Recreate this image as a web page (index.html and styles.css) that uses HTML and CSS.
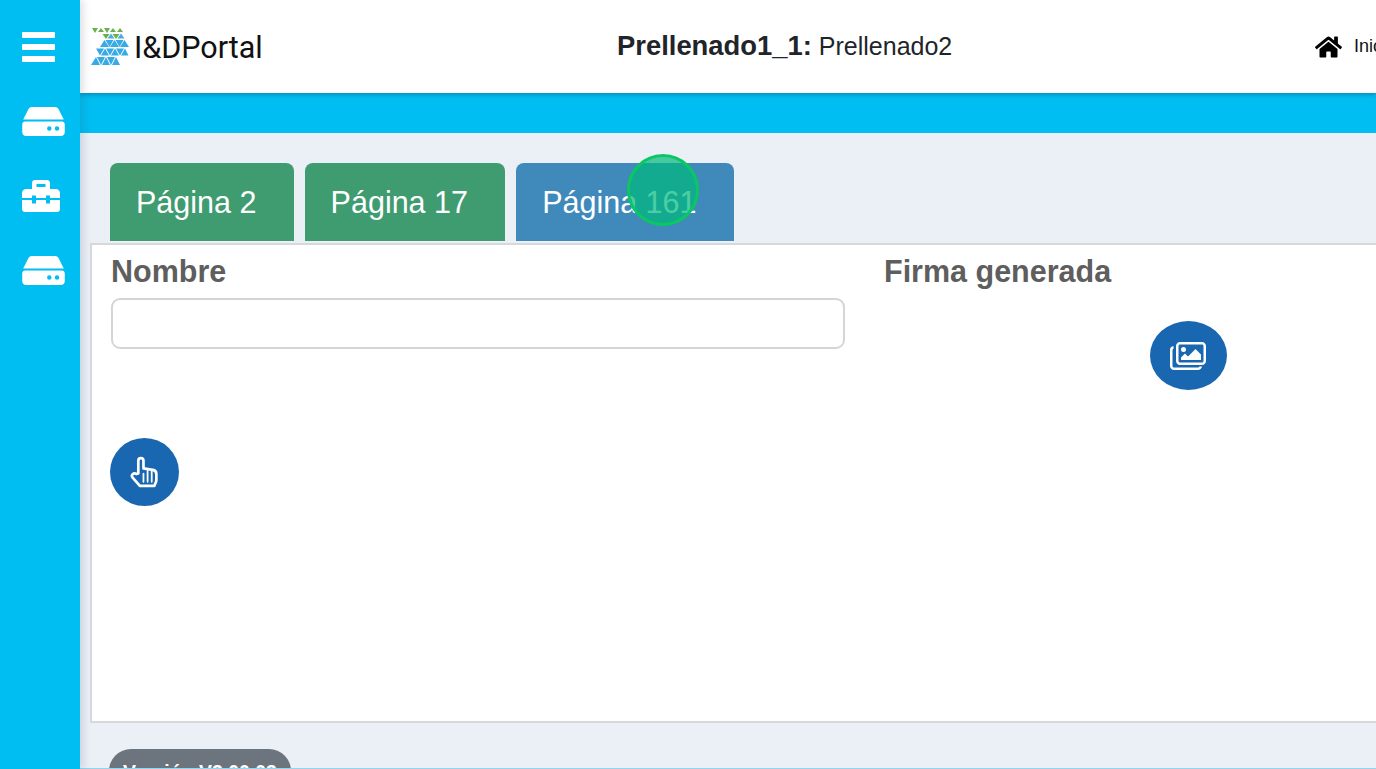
FILE: index.html
```html
<!DOCTYPE html>
<html lang="es">
<head>
  <meta charset="UTF-8">
  <title>I&amp;DPortal</title>
  <link rel="stylesheet" href="styles.css">
</head>
<body>
  <aside class="sidebar">
    <div class="menu-icon"><span></span><span></span><span></span></div>
    <svg class="side-icon" viewBox="0 0 44 30"><path d="M10 0h24c1.500 0 2.800.8 3.500 2L43 13H1L6.500 2C7.200.800 8.500 0 10 0z"/><path fill-rule="evenodd" d="M3 15h38c1.700 0 3 1.300 3 3v8c0 2.200-1.800 4-4 4H4c-2.200 0-4-1.800-4-4v-8c0-1.700 1.300-3 3-3zm25 9.500a2.300 2.300 0 1 0 0-4.600 2.300 2.300 0 0 0 0 4.600zm8 0a2.300 2.300 0 1 0 0-4.600 2.300 2.300 0 0 0 0 4.600z"/></svg>
    <svg class="side-icon tool" viewBox="0 0 38 32"><path fill-rule="evenodd" d="M10 9V3c0-1.700 1.300-3 3-3h12c1.700 0 3 1.300 3 3v6h6c2.200 0 4 1.800 4 4v5H28v-2.500h-4V18H14v-2.500h-4V18H0v-5c0-2.200 1.800-4 4-4h6zm4.500-5v3h9V4h-9z"/><path d="M0 20h10v3.500h4V20h10v3.500h4V20h10v9c0 1.700-1.300 3-3 3H3c-1.700 0-3-1.300-3-3v-9z"/></svg>
    <svg class="side-icon" viewBox="0 0 44 30"><path d="M10 0h24c1.500 0 2.800.8 3.500 2L43 13H1L6.500 2C7.200.800 8.500 0 10 0z"/><path fill-rule="evenodd" d="M3 15h38c1.700 0 3 1.300 3 3v8c0 2.200-1.800 4-4 4H4c-2.200 0-4-1.800-4-4v-8c0-1.700 1.300-3 3-3zm25 9.500a2.300 2.300 0 1 0 0-4.600 2.300 2.300 0 0 0 0 4.600zm8 0a2.300 2.300 0 1 0 0-4.600 2.300 2.300 0 0 0 0 4.600z"/></svg>
  </aside>

  <div class="main">
    <header class="topbar">
      <div class="brand">
        <svg class="logo" viewBox="0 0 42 38">
          <path fill="#6ab04c" d="M1 1h6l-3 5zM7 5l3-4 3 4zM13 1h6l-3 5zM19 5l3-4 3 4zM26 5l3-4 3 4zM11.500 7h7l-3.500 5zM21.500 7h7l-3.500 5z"/>
          <path fill="#45aee2" d="M16.500 11.500l3.500-5 3.500 5zM26.500 11.500l3.500-5 3.500 5z"/>
          <path fill="#38aae6" d="M9 20l4.500-7 4.500 7zM14.500 13h8l-4 7zM19 20l4.500-7 4.500 7zM24.500 13h8l-4 7zM29 20l4.500-7 4.500 7zM5 21.500h8l-4 7zM10 28.500l4-7 4 7zM15 21.500h8l-4 7zM20 28.500l4-7 4 7zM25 21.500h8l-4 7zM30 28.500l4-7 3.500 7zM0 38l5-8 4 8zM6 30h8l-4 8zM11 38l4-8 4 8zM16 30h8l-4 8zM21 38l4-8 4 8z"/>
        </svg>
        <span class="brand-name">I&amp;DPortal</span>
      </div>
      <h1 class="title"><b>Prellenado1_1:</b> Prellenado2</h1>
      <a class="home-link" href="#">
        <svg viewBox="0 0 576 512"><path d="M280.400 148.300L96 300.100V464a16 16 0 0 0 16 16l112.100-.3a16 16 0 0 0 15.900-16V368a16 16 0 0 1 16-16h64a16 16 0 0 1 16 16v95.600a16 16 0 0 0 16 16.100L464 480a16 16 0 0 0 16-16V300L295.700 148.300a12.200 12.200 0 0 0-15.300 0zM571.600 251.500L488 182.600V44.100a12 12 0 0 0-12-12h-56a12 12 0 0 0-12 12v72.600L318.500 43a48 48 0 0 0-61 0L4.300 251.500a12 12 0 0 0-1.600 16.900l25.500 31A12 12 0 0 0 45.200 301l235.200-193.700a12.200 12.200 0 0 1 15.300 0L530.900 301a12 12 0 0 0 16.900-1.600l25.500-31a12 12 0 0 0-1.700-16.900z"/></svg>
        <span>Inicio</span>
      </a>
    </header>
    <div class="stripe"></div>

    <div class="content">
      <div class="tabs">
        <a class="tab tab-green" href="#">Página 2</a>
        <a class="tab tab-green" href="#">Página 17</a>
        <a class="tab tab-blue" href="#">Página 161</a>
      </div>
      <span class="click-mark"></span>

      <section class="panel">
        <div class="col-left">
          <label class="field-label" for="nombre">Nombre</label>
          <input class="field-input" id="nombre" type="text">
          <button class="round-btn hand-btn">
            <svg viewBox="0 0 30 32" fill="none" stroke="#fff" stroke-width="2.600" stroke-linejoin="round" stroke-linecap="round"><path d="M9 17V4.500a2.500 2.500 0 0 1 5 0V12l9 1.500c2 .3 3.500 2 3.500 4V23c0 1-.2 2-.7 3l-1.300 3H10.500L3.500 21c-2-2.500 1-5.500 3.500-3.500z"/><path d="M14 17v8M18 14.500V25M22 15v10" stroke-width="1.700"/></svg>
          </button>
        </div>
        <div class="col-right">
          <div class="field-label">Firma generada</div>
          <button class="round-btn image-btn">
            <svg viewBox="0 0 36 28"><path fill="#fff" fill-rule="evenodd" d="M10 0h22c2.200 0 4 1.800 4 4v15c0 2.200-1.800 4-4 4H10c-2.200 0-4-1.800-4-4V4c0-2.200 1.800-4 4-4zm0 2.500c-.8 0-1.500.7-1.500 1.500v15c0 .8.700 1.500 1.500 1.500h22c.8 0 1.500-.7 1.500-1.500V4c0-.8-.7-1.500-1.500-1.500H10z"/><circle fill="#fff" cx="13.500" cy="7.500" r="2.500"/><path fill="#fff" d="M11 18v-2.500l4-4 3 3 7.500-7.500 5.500 5.500V18z"/><path fill="#fff" d="M0 8c0-2 1-3.500 3.500-4v2.700C2.800 7 2.500 7.500 2.500 8v16c0 .8.700 1.500 1.500 1.500h24c.6 0 1-.3 1.300-.9H32c-.5 2.200-2 3.400-4 3.400H4c-2.200 0-4-1.800-4-4V8z"/></svg>
          </button>
        </div>
      </section>

      <div class="version">Versión V3.00.03</div>
    </div>
    <div class="bottom-line"></div>
  </div>
</body>
</html>
```

FILE: styles.css
```css
* { box-sizing: border-box; }
html, body { height: 100%; }
body {
  margin: 0; display: flex; overflow: hidden; background: #ebeff6;
  font-family: "Liberation Sans", Arial, sans-serif;
}

.sidebar {
  width: 80px; flex: none; background: #00bef1; z-index: 2;
  display: flex; flex-direction: column; align-items: flex-start;
  padding: 32px 0 0 22px; box-shadow: 3px 0 8px rgba(60, 70, 100, .18);
}
.menu-icon { width: 33px; display: flex; flex-direction: column; gap: 6px; margin-bottom: 45px; }
.menu-icon span { height: 6px; background: #fff; border-radius: 1px; }
.side-icon { width: 43px; height: 29px; fill: #fff; margin-bottom: 44px; display: block; }
.side-icon.tool { width: 38px; height: 32px; }

.main { flex: 1; min-width: 0; overflow: hidden; display: flex; flex-direction: column; }

.topbar {
  height: 93px; flex: none; background: #fff; display: flex; align-items: center;
  padding-left: 11px; white-space: nowrap; z-index: 1;
  box-shadow: 0 2px 4px rgba(0, 60, 90, .35);
}
.brand { display: flex; align-items: center; width: 526px; flex: none; }
.logo { width: 42px; height: 38px; flex: none; margin-right: 1px; margin-top: -2px; }
.brand-name { font-family: Roboto, sans-serif; font-size: 30.500px; color: #111; margin-top: 1px; }
.title { margin: -2px 0 0; font-size: 25px; font-weight: 400; color: #212529; width: 698px; flex: none; }
.title b { font-size: 27.400px; font-weight: 700; }
.home-link { display: flex; align-items: center; gap: 12px; color: #111; text-decoration: none; font-size: 18px; flex: none; }
.home-link svg { width: 27px; height: 24px; fill: #000; }

.stripe { height: 40px; flex: none; background: #00bef1; }

.content { flex: 1; padding: 30px 0 0 10px; position: relative; min-height: 0; overflow: hidden; }
.bottom-line { height: 1px; flex: none; background: #8fd6ee; }

.tabs { display: flex; gap: 11px; padding-left: 20px; height: 78px; }
.tab {
  display: flex; align-items: center; padding: 0 37.200px 0 26px;
  font-size: 30.500px; color: #fff; text-decoration: none;
  border-radius: 8px 8px 0 0;
}
.tab-green { background: #3f9b70; }
.tab-blue { background: #3f8abb; }

.click-mark {
  position: absolute; left: 547px; top: 21px; width: 72px; height: 72px;
  border-radius: 50%; border: 3px solid #0bc763; background: rgba(0, 185, 125, .7);
}

.panel {
  width: 1320px; height: 480px; margin-top: 2px; background: #fff;
  border: 2px solid #d6d8db; border-right: 0; display: flex; padding: 9px 0 0 19px;
}
.col-left { width: 734px; margin-right: 39px; flex: none; }
.col-right { width: 608px; flex: none; text-align: center; }
.field-label { display: block; font-size: 30.500px; font-weight: 700; color: #5e5e5e; line-height: 35px; text-align: left; }
.field-input {
  display: block; width: 100%; height: 51px; margin-top: 9px; background: #fff;
  border: 2px solid #d3d5d8; border-radius: 9px;
}
.round-btn { border: 0; padding: 0; background: #1a67b1; border-radius: 50%; display: flex; align-items: center; justify-content: center; }
.hand-btn { width: 69px; height: 68px; margin: 89px 0 0 -1px; }
.hand-btn svg { width: 31px; height: 33px; }
.image-btn { width: 77px; height: 69px; margin: 32px auto 0; }
.image-btn svg { width: 36px; height: 28px; }

.version {
  width: 182px; height: 60px; margin: 26px 0 0 19px; background: #6c757d; color: #fff;
  border-radius: 22px 22px 0 0; text-align: center; font-size: 19.500px; font-weight: 700; padding-top: 12px;
}
```
